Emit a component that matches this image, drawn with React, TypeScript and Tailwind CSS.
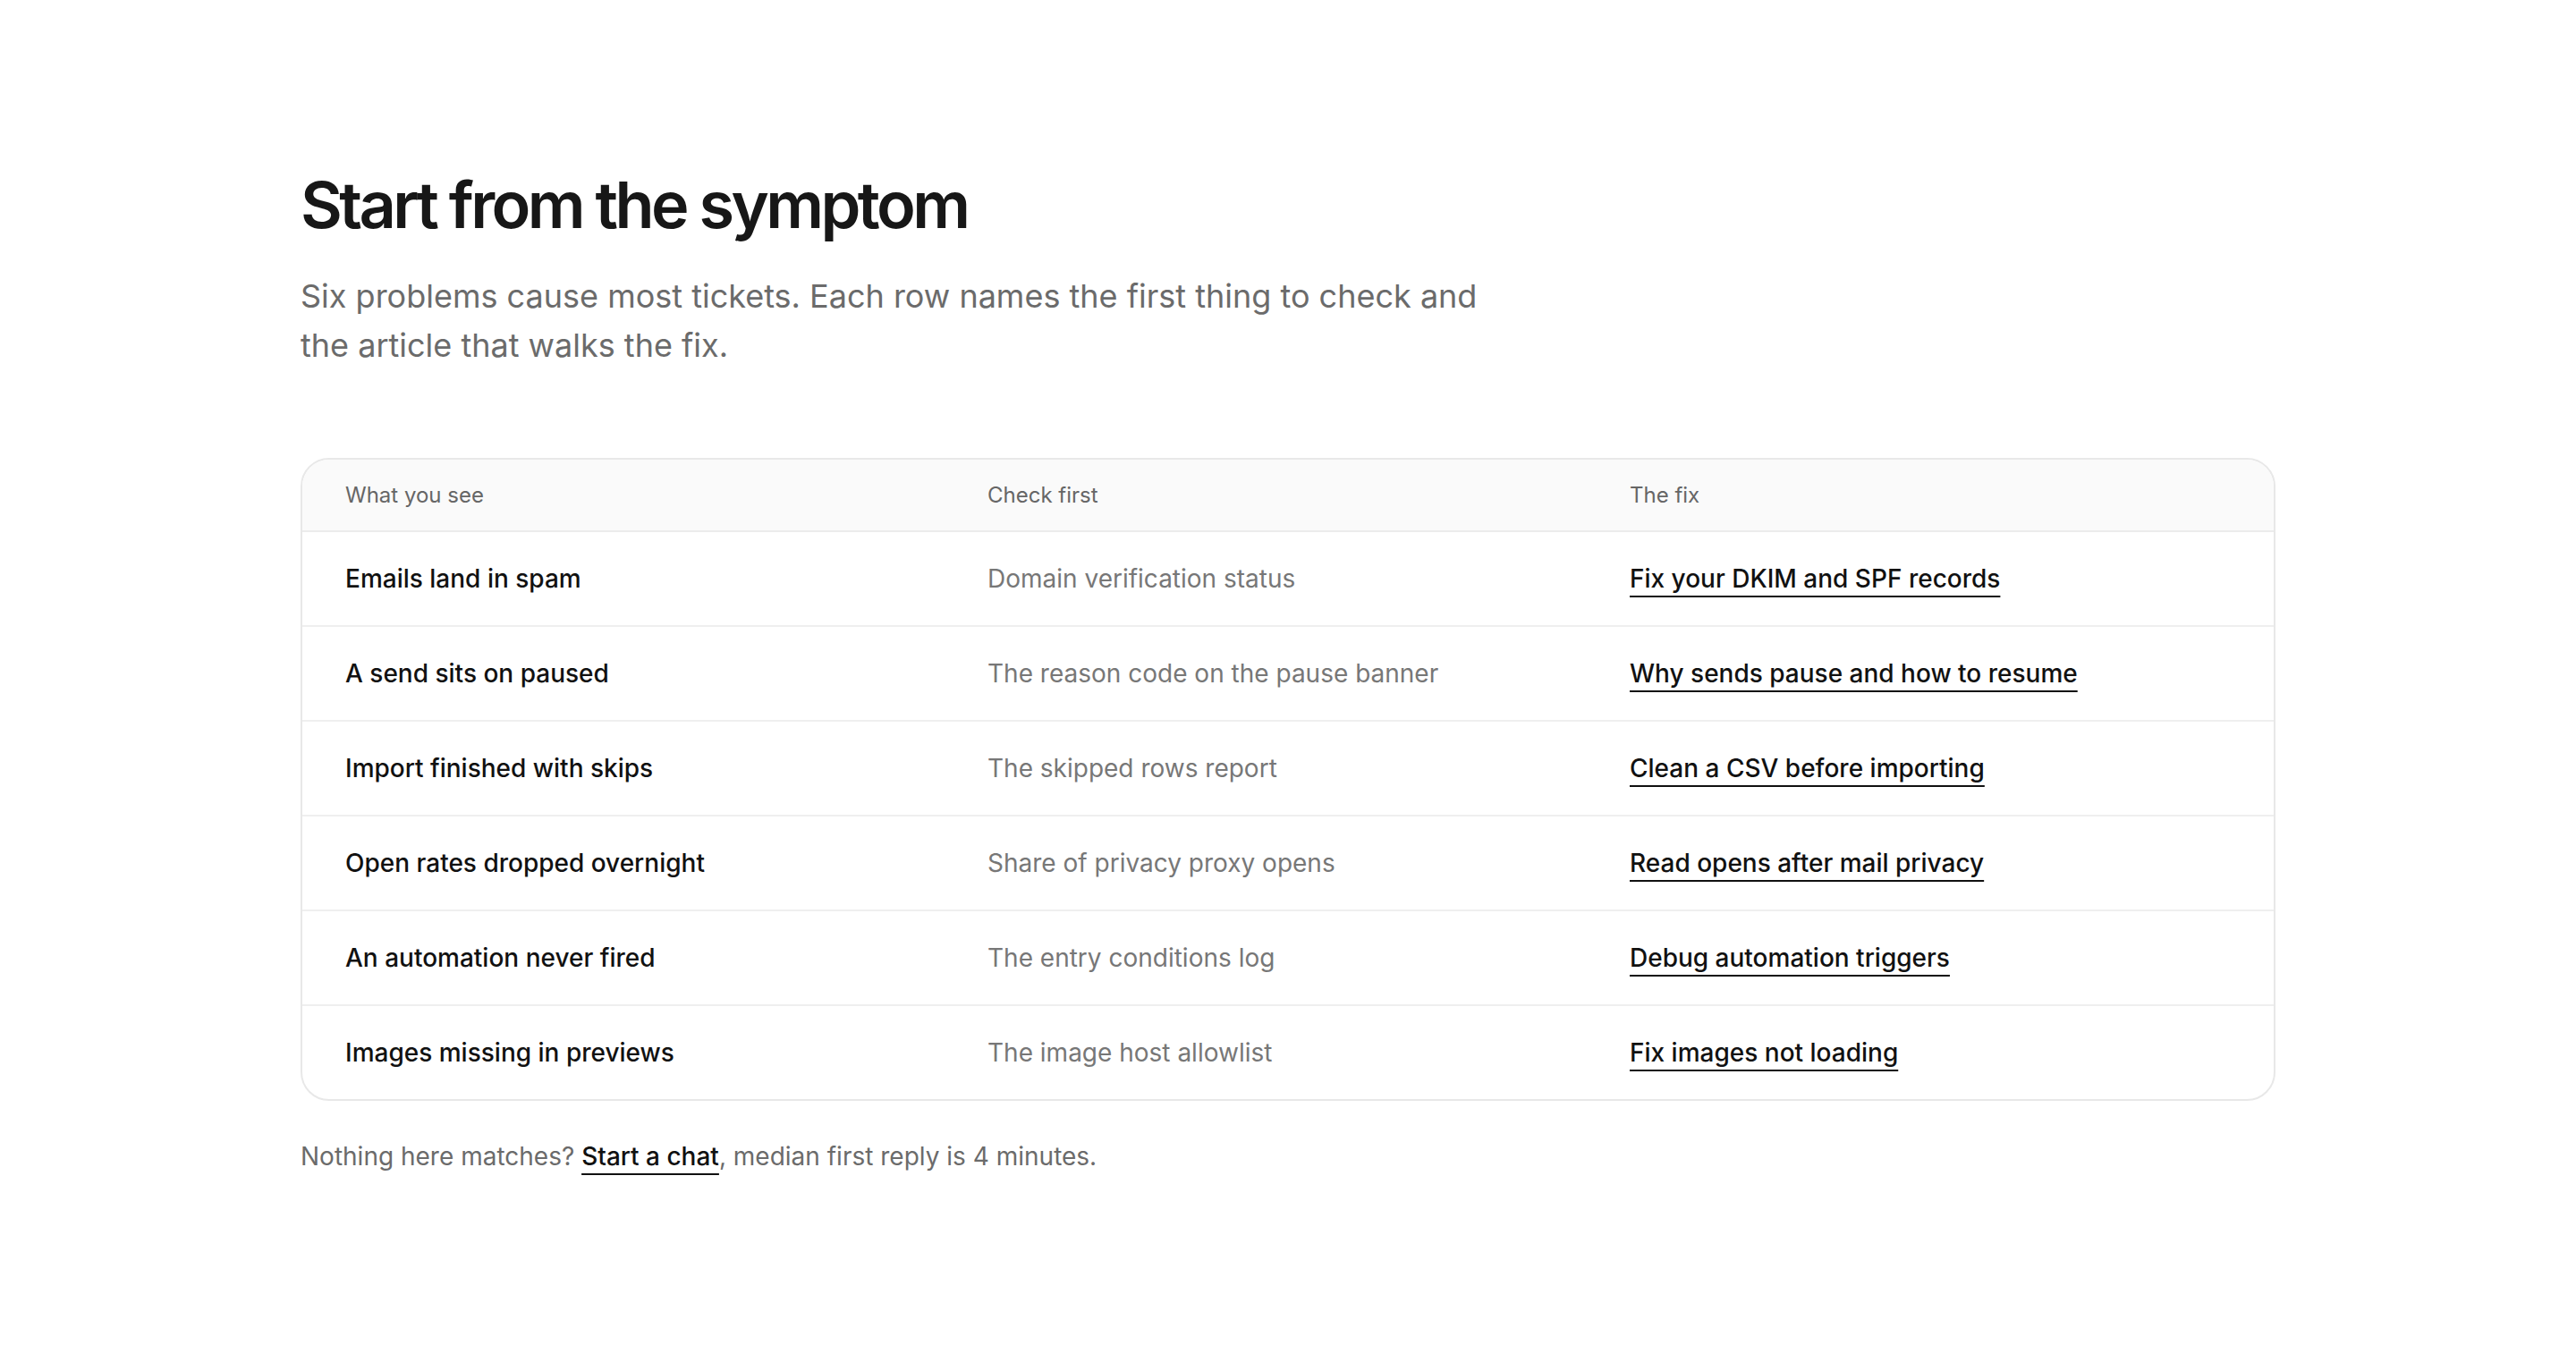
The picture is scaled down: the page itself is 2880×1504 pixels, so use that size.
const rows = [
  { see: 'Emails land in spam', check: 'Domain verification status', fix: 'Fix your DKIM and SPF records' },
  { see: 'A send sits on paused', check: 'The reason code on the pause banner', fix: 'Why sends pause and how to resume' },
  { see: 'Import finished with skips', check: 'The skipped rows report', fix: 'Clean a CSV before importing' },
  { see: 'Open rates dropped overnight', check: 'Share of privacy proxy opens', fix: 'Read opens after mail privacy' },
  { see: 'An automation never fired', check: 'The entry conditions log', fix: 'Debug automation triggers' },
  { see: 'Images missing in previews', check: 'The image host allowlist', fix: 'Fix images not loading' }
]

export default function App() {
  return (
    <div className="min-h-screen bg-white font-['Inter',sans-serif] antialiased">
      <main className="mx-auto w-[2208px] pt-[189px] pb-[200px]">
        {/* Heading */}
        <h1 className="text-[72px] leading-[1.1] font-semibold tracking-[-0.05em] text-[#171717]">
          Start from the symptom
        </h1>
        <p className="mt-[36px] max-w-[1340px] text-[36px] leading-[55px] text-[#6b6b6b]">
          Six problems cause most tickets. Each row names the first thing to check and the article
          that walks the fix.
        </p>

        {/* Table */}
        <div className="mt-[98px] rounded-[32px] border-2 border-[#e8e8e8] overflow-hidden">
          <div className="grid grid-cols-[718px_718px_1fr] h-[81px] items-center bg-[#fafafa] border-b-2 border-[#ececec] text-[24px] text-[#666666]">
            <div className="px-[48px]">What you see</div>
            <div className="px-[48px]">Check first</div>
            <div className="px-[48px]">The fix</div>
          </div>
          {rows.map((row, i) => (
            <div
              key={row.see}
              className={
                i < rows.length - 1
                  ? 'grid grid-cols-[718px_718px_1fr] h-[106px] items-center border-b-2 border-[#efefef] text-[28px]'
                  : 'grid grid-cols-[718px_718px_1fr] h-[104px] items-center text-[28px]'
              }
            >
              <div className="px-[48px] font-medium text-[#111111]">{row.see}</div>
              <div className="px-[48px] text-[#777777]">{row.check}</div>
              <div className="px-[48px]">
                <a
                  href="#"
                  className="font-medium text-[#111111] underline decoration-2 underline-offset-[9px]"
                >
                  {row.fix}
                </a>
              </div>
            </div>
          ))}
        </div>

        <p className="mt-[40px] text-[28px] leading-[44px] text-[#6b6b6b]">
          Nothing here matches?{' '}
          <a href="#" className="font-medium text-[#111111] underline decoration-2 underline-offset-[9px]">
            Start a chat
          </a>
          , median first reply is 4 minutes.
        </p>
      </main>
    </div>
  )
}
